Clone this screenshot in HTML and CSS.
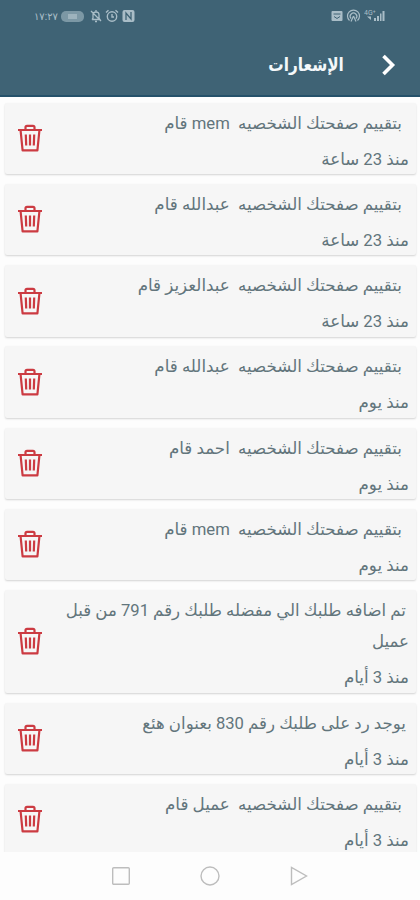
FILE: index.html
```html
<!DOCTYPE html>
<html lang="ar">
<head>
  <meta charset="UTF-8" />
  <title>الإشعارات</title>
  <meta name="viewport" content="width=device-width, initial-scale=1.0" />
  <link rel="stylesheet" href="styles.css">
</head>
<body>

  <!-- trash icon used by every card -->
  <svg class="defs" width="0" height="0">
    <symbol id="trash" viewBox="0 0 26 28">
      <g fill="none" stroke="#cc3b42" stroke-linejoin="round">
        <path d="M1 6H25M8.5 5.5V3.2Q8.5 1.8 10 1.8H16Q17.5 1.8 17.5 3.2V5.5" stroke-width="2.2"/>
        <path d="M3.6 6.5L5.6 26.4H20.4L22.4 6.5" stroke-width="2.2"/>
        <path d="M8.8 10.5L9.2 21.5M13 10.5V21.5M17.2 10.5L16.8 21.5" stroke-width="2.2"/>
      </g>
    </symbol>
  </svg>

  <header class="header">
    <div class="status">
      <div class="status-left">
        <span class="clock">١٧:٢٧</span>
        <span class="battery"><i></i></span>
        <svg width="12" height="14" viewBox="0 0 12 14" fill="none" stroke="#a9bdc7" stroke-width="1.3">
          <path d="M2 10.5H10L9 9V6Q9 3 6 3T3 6V9L2 10.5M5 12.5H7M6 1V3M1 2L11 12"/>
        </svg>
        <svg width="14" height="14" viewBox="0 0 14 14" fill="none" stroke="#a9bdc7" stroke-width="1.4">
          <circle cx="7" cy="7.5" r="4.7"/>
          <path d="M7 5V8H9M1 3.5L3.5 1.2M13 3.5L10.5 1.2"/>
        </svg>
        <svg width="13" height="14" viewBox="0 0 13 14">
          <rect x=".5" y="1" width="12" height="12" rx="2" fill="#a9bdc7"/>
          <path d="M4 11V4L9 10V3" fill="none" stroke="#3f6375" stroke-width="1.3"/>
        </svg>
      </div>
      <div class="status-right">
        <svg width="12" height="12" viewBox="0 0 12 12">
          <rect x=".5" y="1" width="11" height="10" rx="1" fill="#a9bdc7"/>
          <path d="M2.5 4H9.5M3 6.5L6 8.5L9 6.5" fill="none" stroke="#3f6375"/>
        </svg>
        <svg width="15" height="14" viewBox="0 0 15 14" fill="none" stroke="#a9bdc7" stroke-width="1.2">
          <path d="M3.5 11.5A6 6 0 1 1 11.5 11.5M5 9.5A3.3 3.3 0 1 1 10 9.5M7.5 7L5 12.5M7.5 7L10 12.5"/>
        </svg>
        <svg width="21" height="14" viewBox="0 0 21 14" fill="#a9bdc7">
          <text x="0" y="6" font-size="7" font-family="Roboto, sans-serif">4G⁺</text>
          <path d="M3 7.5L7 11V7.5ZM10 9H12V12H10ZM13 7H15V12H13ZM16 4.5H17.5V12H16ZM18.5 2H20.5V12H18.5Z"/>
        </svg>
      </div>
    </div>
    <div class="title-bar">
      <h1>الإشعارات</h1>
      <svg class="back" width="15" height="22" viewBox="0 0 15 22">
        <path d="M2.5 2L11.5 11L2.5 20" fill="none" stroke="#fff" stroke-width="3.6"/>
      </svg>
    </div>
  </header>

  <main class="list">
    <div class="card">
      <div class="text">
        <p class="message indent">بتقييم صفحتك الشخصيه&nbsp; mem قام</p>
        <p class="time">منذ 23 ساعة</p>
      </div>
      <svg class="trash"><use href="#trash"/></svg>
    </div>
    <div class="card">
      <div class="text">
        <p class="message indent">بتقييم صفحتك الشخصيه&nbsp; عبدالله قام</p>
        <p class="time">منذ 23 ساعة</p>
      </div>
      <svg class="trash"><use href="#trash"/></svg>
    </div>
    <div class="card">
      <div class="text">
        <p class="message indent">بتقييم صفحتك الشخصيه&nbsp; عبدالعزيز قام</p>
        <p class="time">منذ 23 ساعة</p>
      </div>
      <svg class="trash"><use href="#trash"/></svg>
    </div>
    <div class="card">
      <div class="text">
        <p class="message indent">بتقييم صفحتك الشخصيه&nbsp; عبدالله قام</p>
        <p class="time">منذ يوم</p>
      </div>
      <svg class="trash"><use href="#trash"/></svg>
    </div>
    <div class="card">
      <div class="text">
        <p class="message indent">بتقييم صفحتك الشخصيه&nbsp; احمد قام</p>
        <p class="time">منذ يوم</p>
      </div>
      <svg class="trash"><use href="#trash"/></svg>
    </div>
    <div class="card">
      <div class="text">
        <p class="message indent">بتقييم صفحتك الشخصيه&nbsp; mem قام</p>
        <p class="time">منذ يوم</p>
      </div>
      <svg class="trash"><use href="#trash"/></svg>
    </div>
    <div class="card">
      <div class="text">
        <p class="message order">تم اضافه طلبك الي مفضله طلبك رقم 791 من قبل<br>عميل</p>
        <p class="time">منذ 3 أيام</p>
      </div>
      <svg class="trash"><use href="#trash"/></svg>
    </div>
    <div class="card">
      <div class="text">
        <p class="message order">يوجد رد على طلبك رقم 830 بعنوان هئع</p>
        <p class="time">منذ 3 أيام</p>
      </div>
      <svg class="trash"><use href="#trash"/></svg>
    </div>
    <div class="card">
      <div class="text">
        <p class="message indent">بتقييم صفحتك الشخصيه&nbsp; عميل قام</p>
        <p class="time">منذ 3 أيام</p>
      </div>
      <svg class="trash"><use href="#trash"/></svg>
    </div>
  </main>

  <nav class="nav">
    <svg width="22" height="22" viewBox="0 0 22 22"><rect x="2.7" y="2.7" width="16.6" height="16.6" rx="1"/></svg>
    <svg width="22" height="22" viewBox="0 0 22 22"><circle cx="11" cy="11" r="9"/></svg>
    <svg width="22" height="22" viewBox="0 0 22 22"><path d="M3.5 2.5V19.5L18.5 11Z"/></svg>
  </nav>

</body>
</html>
```

FILE: styles.css
```css
* {
  box-sizing: border-box;
}

body {
  margin: 0;
  height: 900px;
  display: flex;
  flex-direction: column;
  overflow: hidden;
  background: #fdfdfd;
  color: #62757c;
  font-family: Roboto, "DejaVu Sans", sans-serif;
}

.defs {
  display: none;
}

.header {
  flex: none;
  height: 97px;
  background: #3f6375;
  border-bottom: 2px solid #25516a;
}

.status {
  display: flex;
  justify-content: space-between;
  height: 32px;
  padding: 0 35px 0 34px;
  color: #a9bdc7;
}

.status-left,
.status-right {
  display: flex;
  align-items: center;
  gap: 3px;
}

.clock {
  width: 24px;
  font-size: 10px;
  white-space: nowrap;
}

.battery {
  width: 23px;
  height: 11px;
  margin-right: 3px;
  padding: 3px 7px;
  border-radius: 5px;
  background: #7c98a5;
}

.battery i {
  display: block;
  height: 5px;
  background: #9db3bd;
}

.title-bar {
  display: flex;
  direction: rtl;
  align-items: center;
  height: 65px;
  padding-right: 24px;
}

.title-bar h1 {
  order: 2;
  margin: 0 37px 0 0;
  color: #f4f8fa;
  font-size: 18px;
  white-space: nowrap;
  transform: scaleX(.85);
  transform-origin: right;
}

.list {
  flex: 1;
  min-height: 0;
  overflow: hidden;
  padding: 5.5px 4px 0 5px;
}

.card {
  display: flex;
  direction: rtl;
  align-items: center;
  justify-content: space-between;
  margin-bottom: 9.8px;
  padding: 5px 7px 2.5px 11.5px;
  border-radius: 2px;
  background: #f6f6f6;
  box-shadow: 0 1px 2px rgba(0, 0, 0, .17);
}

.message,
.time {
  margin: 0;
  font-size: 16.7px;
  white-space: nowrap;
}

.message {
  line-height: 31px;
}

.indent {
  padding-right: 7px;
}

.message.order {
  font-size: 16.6px;
  text-indent: 3px;
}

.time {
  margin-top: 9px;
  line-height: 24px;
}

.trash {
  flex: none;
  width: 26px;
  height: 28px;
  margin-bottom: 3px;
}

.nav {
  flex: none;
  display: flex;
  justify-content: center;
  gap: 67px;
  height: 48px;
  padding-top: 13px;
  background: #fdfdfd;
}

.nav svg {
  fill: none;
  stroke: #bdbdbd;
  stroke-width: 1.4;
}
```
